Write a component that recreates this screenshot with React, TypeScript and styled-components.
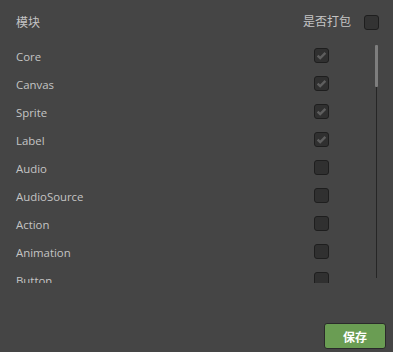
import React, { useState } from "react";
import styled, { createGlobalStyle } from "styled-components";

const GlobalStyle = createGlobalStyle`
  html, body {
    margin: 0;
    padding: 0;
    background: #454545;
  }
  body {
    font-family: "Open Sans", "Noto Sans CJK SC", sans-serif;
    font-size: 11.4px;
    color: #c4c4c4;
  }
`;

const Panel = styled.div`
  width: 393px;
  height: 352px;
  background: #454545;
  display: flex;
  flex-direction: column;
  box-sizing: border-box;
`;

const Header = styled.div`
  height: 41px;
  padding: 3px 14px 0 16px;
  box-sizing: border-box;
  display: flex;
  align-items: center;
  justify-content: space-between;
  font-size: 12px;
`;

const HeaderRight = styled.div`
  display: flex;
  align-items: center;
  gap: 13px;
  span {
    margin-top: -3px;
  }
`;

const Body = styled.div`
  height: 242px;
  display: flex;
  padding-left: 16px;
  overflow: hidden;
`;

const List = styled.div`
  width: 313px;
  display: flex;
  flex-direction: column;
`;

const Row = styled.div`
  height: 28px;
  flex: none;
  display: flex;
  align-items: center;
  justify-content: space-between;
  span {
    margin-top: 3px;
  }
`;

const Box = styled.div<{ $header?: boolean }>`
  width: 13px;
  height: 13px;
  flex: none;
  border: 1px solid #1e1e1e;
  border-radius: 3px;
  background: ${({ $header }) => ($header ? "#333333" : "#303030")};
  display: flex;
  align-items: center;
  justify-content: center;
  cursor: pointer;
`;

const ScrollBar = styled.div`
  margin-left: 46px;
  width: 3px;
  padding-top: 4px;
  display: flex;
  flex-direction: column;
  align-items: center;
`;

const Thumb = styled.div`
  width: 3px;
  height: 42px;
  background: #7e7e7e;
  border-radius: 1px;
`;

const Track = styled.div`
  width: 1px;
  height: 191px;
  background: #262626;
`;

const Footer = styled.div`
  flex: 1;
  display: flex;
  align-items: flex-end;
  justify-content: flex-end;
  padding: 0 7px 3px 0;
`;

const SaveButton = styled.button`
  width: 62px;
  height: 26px;
  background: #6a9d53;
  border: 1px solid #2a2a2a;
  border-radius: 3px;
  color: #ffffff;
  font-family: "Noto Sans CJK SC", sans-serif;
  font-size: 12px;
  font-weight: bold;
  padding: 0;
  cursor: pointer;
`;

const Check = () => (
  <svg width="11" height="11" viewBox="0 0 11 11">
    <path d="M1.6 5.6 L4.2 8.1 L9.4 2.9" stroke="#5e5e5e" strokeWidth="2.4" fill="none" />
  </svg>
);

const modules = [
  { name: "Core", on: true },
  { name: "Canvas", on: true },
  { name: "Sprite", on: true },
  { name: "Label", on: true },
  { name: "Audio", on: false },
  { name: "AudioSource", on: false },
  { name: "Action", on: false },
  { name: "Animation", on: false },
  { name: "Button", on: false },
];

const App = () => {
  const [checked, setChecked] = useState(modules.map((m) => m.on));
  const toggle = (i: number) =>
    setChecked(checked.map((c, j) => (j === i ? !c : c)));

  return (
    <Panel>
      <GlobalStyle />
      <Header>
        <span>模块</span>
        <HeaderRight>
          <span>是否打包</span>
          <Box $header />
        </HeaderRight>
      </Header>
      <Body>
        <List>
          {modules.map((m, i) => (
            <Row key={m.name}>
              <span>{m.name}</span>
              <Box onClick={() => toggle(i)}>{checked[i] && <Check />}</Box>
            </Row>
          ))}
        </List>
        <ScrollBar>
          <Thumb />
          <Track />
        </ScrollBar>
      </Body>
      <Footer>
        <SaveButton>保存</SaveButton>
      </Footer>
    </Panel>
  );
};

export default App;
